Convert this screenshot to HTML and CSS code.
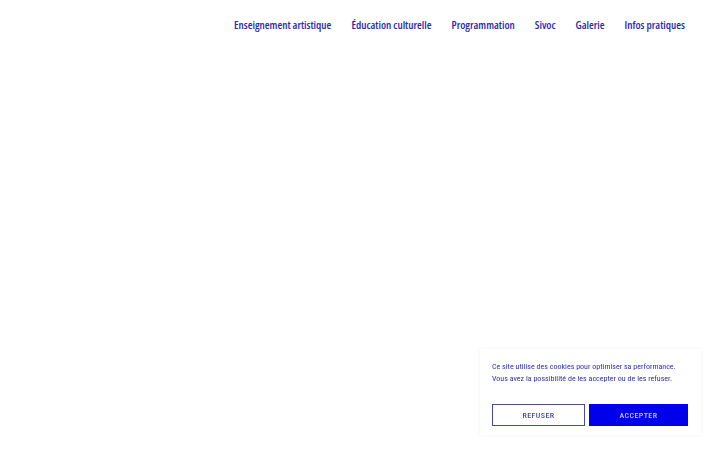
FILE: index.html
```html
<!DOCTYPE html>
<html>
<head>
    <meta charset="UTF-8">
    <title>Accueil</title>
    <link rel="stylesheet" href="styles.css">
</head>

<body>
    <header class="header">
        <nav class="menu">
            <a href="#">Enseignement artistique</a>
            <a href="#">Éducation culturelle</a>
            <a href="#">Programmation</a>
            <a href="#">Sivoc</a>
            <a href="#">Galerie</a>
            <a href="#">Infos pratiques</a>
        </nav>
    </header>

    <main class="content"></main>

    <!-- Bandeau cookies -->
    <div class="cookies">
        <p>Ce site utilise des cookies pour optimiser sa performance.<br>
        Vous avez la possibilité de les accepter ou de les refuser.</p>
        <div class="cookies-actions">
            <button class="btn btn-refuse">Refuser</button>
            <button class="btn btn-accept">Accepter</button>
        </div>
    </div>
</body>
</html>
```

FILE: styles.css
```css
body { margin: 0; background: #fff; font-family: "Open Sans", sans-serif; }
.header { display: flex; justify-content: flex-end; padding: 17px 35px 0 0; }
.menu { display: flex; gap: 20px; }
.menu a {
    color: #2a2aa6;
    text-decoration: none;
    font-size: 11px;
    font-stretch: 75%;
    font-weight: 600;
    line-height: 15px;
}
.content { height: 300px; }
.cookies {
    position: fixed;
    left: 480px;
    top: 349px;
    width: 197px;
    padding: 12px 12px 9px 12px;
    background: #fff;
    box-shadow: 0 0 3px rgba(0,0,0,0.06);
}
.cookies p {
    margin: 0;
    color: #3030ad;
    font-family: "Roboto", sans-serif;
    font-stretch: 86%;
    font-size: 8px;
    line-height: 12px;
    white-space: nowrap;
}
.cookies-actions { display: flex; gap: 4px; margin-top: 19px; }
.btn {
    height: 22px;
    padding: 0;
    font-family: "Roboto", sans-serif;
    font-stretch: 87%;
    font-size: 8px;
    font-weight: 500;
    letter-spacing: 0.4px;
    text-transform: uppercase;
    cursor: pointer;
}
.btn-refuse { width: 93px; background: #fff; color: #4a4a9e; border: 1px solid #4a4a9e; }
.btn-accept { width: 99px; background: #0000ea; color: #c8c8ff; border: none; }
```
